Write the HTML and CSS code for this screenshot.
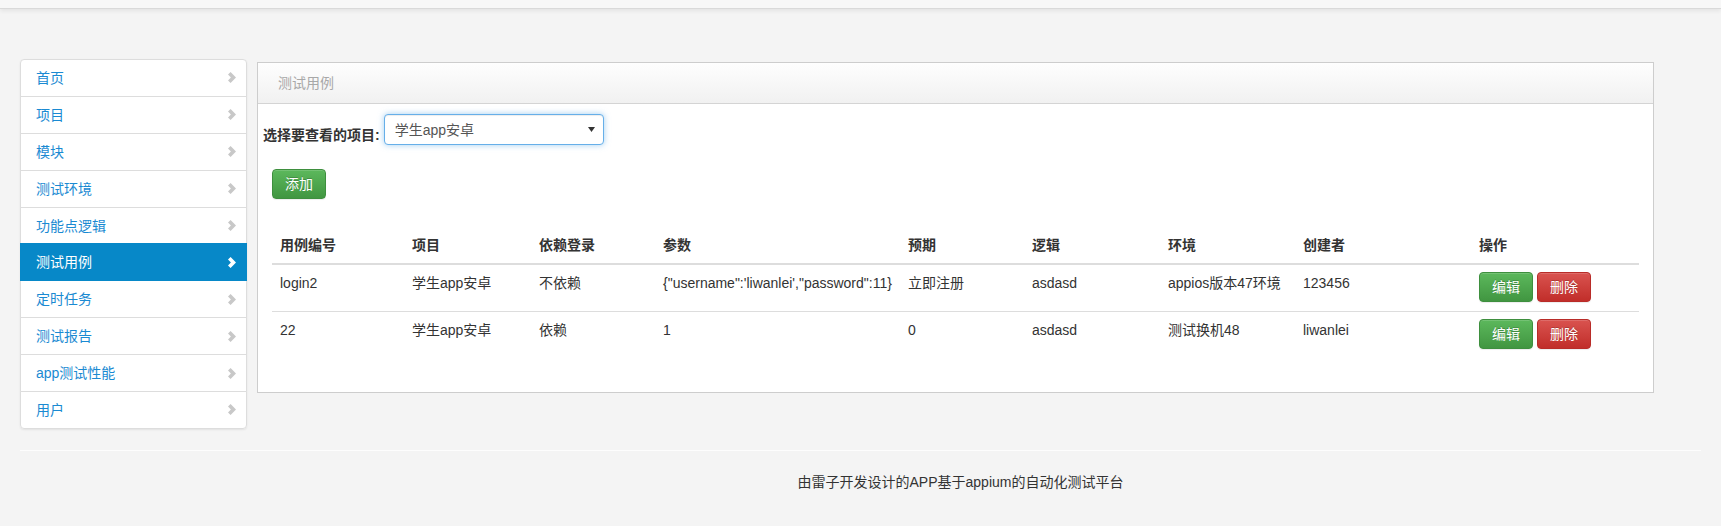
FILE: index.html
```html
<!DOCTYPE html>
<html lang="zh-CN">
<head>
<meta charset="utf-8">
<title>测试用例</title>
<link rel="stylesheet" href="styles.css">
</head>
<body>
<div class="topbar"></div>
<div class="layout">
  <nav class="menu">
    <a class="menu-item" href="#"><span>首页</span><svg class="chev" viewBox="0 0 8 11" width="8" height="11"><path d="M0 2.6 L2.6 0 L8 5.5 L2.6 11 L0 8.4 L2.9 5.5Z"/></svg></a>
    <a class="menu-item" href="#"><span>项目</span><svg class="chev" viewBox="0 0 8 11" width="8" height="11"><path d="M0 2.6 L2.6 0 L8 5.5 L2.6 11 L0 8.4 L2.9 5.5Z"/></svg></a>
    <a class="menu-item" href="#"><span>模块</span><svg class="chev" viewBox="0 0 8 11" width="8" height="11"><path d="M0 2.6 L2.6 0 L8 5.5 L2.6 11 L0 8.4 L2.9 5.5Z"/></svg></a>
    <a class="menu-item" href="#"><span>测试环境</span><svg class="chev" viewBox="0 0 8 11" width="8" height="11"><path d="M0 2.6 L2.6 0 L8 5.5 L2.6 11 L0 8.4 L2.9 5.5Z"/></svg></a>
    <a class="menu-item" href="#"><span>功能点逻辑</span><svg class="chev" viewBox="0 0 8 11" width="8" height="11"><path d="M0 2.6 L2.6 0 L8 5.5 L2.6 11 L0 8.4 L2.9 5.5Z"/></svg></a>
    <a class="menu-item active" href="#"><span>测试用例</span><svg class="chev" viewBox="0 0 8 11" width="8" height="11"><path d="M0 2.6 L2.6 0 L8 5.5 L2.6 11 L0 8.4 L2.9 5.5Z"/></svg></a>
    <a class="menu-item" href="#"><span>定时任务</span><svg class="chev" viewBox="0 0 8 11" width="8" height="11"><path d="M0 2.6 L2.6 0 L8 5.5 L2.6 11 L0 8.4 L2.9 5.5Z"/></svg></a>
    <a class="menu-item" href="#"><span>测试报告</span><svg class="chev" viewBox="0 0 8 11" width="8" height="11"><path d="M0 2.6 L2.6 0 L8 5.5 L2.6 11 L0 8.4 L2.9 5.5Z"/></svg></a>
    <a class="menu-item" href="#"><span>app测试性能</span><svg class="chev" viewBox="0 0 8 11" width="8" height="11"><path d="M0 2.6 L2.6 0 L8 5.5 L2.6 11 L0 8.4 L2.9 5.5Z"/></svg></a>
    <a class="menu-item" href="#"><span>用户</span><svg class="chev" viewBox="0 0 8 11" width="8" height="11"><path d="M0 2.6 L2.6 0 L8 5.5 L2.6 11 L0 8.4 L2.9 5.5Z"/></svg></a>
  </nav>

  <section class="panel">
    <div class="panel-heading">测试用例</div>
    <div class="panel-body">
      <div class="filter">
        <label class="filter-label">选择要查看的项目:</label>
        <div class="select">
          <span>学生app安卓</span>
          <svg class="caret" viewBox="0 0 7 5" width="7" height="5"><path d="M0 0H7L3.5 5Z"/></svg>
        </div>
      </div>
      <div class="toolbar">
        <a class="btn btn-success" href="#">添加</a>
      </div>
      <table class="table">
        <colgroup>
          <col class="c1"><col class="c2"><col class="c3"><col class="c4"><col class="c5"><col class="c6"><col class="c7"><col class="c8"><col class="c9">
        </colgroup>
        <thead>
          <tr>
            <th>用例编号</th><th>项目</th><th>依赖登录</th><th>参数</th><th>预期</th><th>逻辑</th><th>环境</th><th>创建者</th><th>操作</th>
          </tr>
        </thead>
        <tbody>
          <tr>
            <td>login2</td><td>学生app安卓</td><td>不依赖</td><td>{"username":'liwanlei',"password":11}</td><td>立即注册</td><td>asdasd</td><td>appios版本47环境</td><td>123456</td>
            <td class="ops"><a class="btn btn-success" href="#">编辑</a><a class="btn btn-danger" href="#">删除</a></td>
          </tr>
          <tr>
            <td>22</td><td>学生app安卓</td><td>依赖</td><td>1</td><td>0</td><td>asdasd</td><td>测试换机48</td><td>liwanlei</td>
            <td class="ops"><a class="btn btn-success" href="#">编辑</a><a class="btn btn-danger" href="#">删除</a></td>
          </tr>
        </tbody>
      </table>
    </div>
  </section>
</div>
<footer class="footer">
  <p class="footer-text">由雷子开发设计的APP基于appium的自动化测试平台</p>
</footer>
</body>
</html>
```

FILE: styles.css
```css
* { box-sizing: border-box; }

body {
  margin: 0;
  background: #f4f4f4;
  color: #333;
  font-family: "Liberation Sans", "Noto Sans CJK SC", sans-serif;
  font-size: 14px;
  line-height: 20px;
}

a { text-decoration: none; }

.topbar {
  height: 9px;
  background: #f7f7f7;
  border-bottom: 1px solid #d9d9d9;
  box-shadow: 0 2px 4px rgba(0, 0, 0, 0.07);
}

.layout {
  display: grid;
  grid-template-columns: 227px 1397px;
  column-gap: 10px;
  align-items: start;
  padding: 50px 20px 0;
}

/* sidebar */
.menu {
  display: flex;
  flex-direction: column;
  border-radius: 4px;
  box-shadow: 0 1px 2px rgba(0, 0, 0, 0.075);
}

.menu-item {
  position: relative;
  display: flex;
  align-items: center;
  justify-content: space-between;
  height: 37.9px;
  margin-bottom: -1px;
  padding: 0 10px 0 15px;
  background: #fff;
  border: 1px solid #ddd;
  color: #1a8ad2;
}

.menu-item:first-child { border-radius: 4px 4px 0 0; }
.menu-item:last-child { border-radius: 0 0 4px 4px; margin-bottom: 0; }

.menu-item .chev { fill: #c8c8c8; }

.menu-item.active {
  z-index: 2;
  background: #0788c8;
  border-color: #0788c8;
  color: #fff;
}

.menu-item.active .chev { fill: #fff; }

/* panel */
.panel {
  margin-top: 3px;
  background: #fff;
  border: 1px solid #cdcdcd;
}

.panel-heading {
  height: 41px;
  padding: 10px 20px;
  color: #a8a8a8;
  background: linear-gradient(to bottom, #fefefe 0%, #f1f1f1 100%);
  border-bottom: 1px solid #d4d4d4;
}

.panel-body {
  padding: 10px 14px 34px;
}

.filter {
  display: flex;
  align-items: flex-end;
  gap: 4px;
  margin-left: -9px;
}

.filter-label {
  font-weight: bold;
  color: #333;
}

.select {
  display: flex;
  align-items: center;
  justify-content: space-between;
  width: 220px;
  height: 31px;
  padding: 0 8px 0 10px;
  color: #555;
  background: #fff;
  border: 1px solid #66afe9;
  border-radius: 4px;
  box-shadow: inset 0 1px 1px rgba(0, 0, 0, 0.075), 0 0 6px rgba(102, 175, 233, 0.6);
}

.caret { fill: #333; }

.toolbar {
  margin-top: 24px;
  height: 30px;
}

.btn {
  display: inline-block;
  height: 30px;
  padding: 0 12px;
  line-height: 28px;
  color: #fff;
  border: 1px solid transparent;
  border-radius: 4px;
  text-shadow: 0 -1px 0 rgba(0, 0, 0, 0.2);
  box-shadow: inset 0 1px 0 rgba(255, 255, 255, 0.15), 0 1px 1px rgba(0, 0, 0, 0.075);
  vertical-align: top;
}

.btn-success {
  background: linear-gradient(to bottom, #5cb85c 0%, #419641 100%);
  border-color: #3e8f3e;
}

.btn-danger {
  background: linear-gradient(to bottom, #d9534f 0%, #c12e2a 100%);
  border-color: #b92c28;
}

/* table */
.table {
  width: 100%;
  margin-top: 28px;
  border-collapse: collapse;
  table-layout: fixed;
}

.c1 { width: 132px; }
.c2 { width: 127px; }
.c3 { width: 124px; }
.c4 { width: 245px; }
.c5 { width: 124px; }
.c6 { width: 136px; }
.c7 { width: 135px; }
.c8 { width: 176px; }
.c9 { width: 168px; }

.table th,
.table td {
  padding: 8px;
  text-align: left;
  vertical-align: top;
  white-space: nowrap;
}

.table th {
  vertical-align: bottom;
  font-weight: bold;
  border-bottom: 2px solid #ddd;
}

.table td {
  height: 47px;
  border-top: 1px solid #ddd;
}

.table td.ops {
  padding-top: 7px;
  padding-bottom: 0;
  line-height: 0;
}

.ops .btn {
  height: 30px;
  line-height: 28px;
  margin-right: 4px;
}

/* footer */
.footer {
  margin: 21px 20px 0;
  border-top: 1px solid #fdfdfd;
}

.footer-text {
  margin: 0;
  padding: 21px 0 0 200px;
  text-align: center;
  color: #333;
}
```
